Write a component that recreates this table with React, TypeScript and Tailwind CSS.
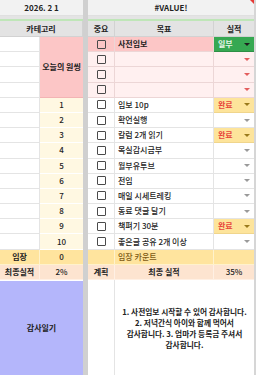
import React from "react";

const items = [
  { t: "임보 10p", done: true },
  { t: "확언실행", done: false },
  { t: "칼럼 2개 읽기", done: true },
  { t: "목실감시금부", done: false },
  { t: "월부유투브", done: false },
  { t: "전임", done: false },
  { t: "매일 시세트레킹", done: false },
  { t: "동료 댓글 달기", done: false },
  { t: "책펴기 30분", done: true },
  { t: "좋은글 공유 2개 이상", done: false },
];

function Arrow({ color }: { color: string }) {
  return (
    <svg width="6" height="3" viewBox="0 0 6 3" className="shrink-0">
      <polygon points="0,0 6,0 3,3" fill={color} />
    </svg>
  );
}

function Check() {
  return <div className="w-[9px] h-[9px] border-[1.4px] border-[#4a4a4a] rounded-[1px]" />;
}

export default function App() {
  const font = { fontFamily: '"Noto Sans CJK KR", "Noto Sans", sans-serif' };
  return (
    <div
      className="w-[256px] h-[375px] bg-white grid grid-cols-[40px_43px_5px_27px_99px_40px_2px] grid-rows-[16px_3px_2px_16px_repeat(16,15.2px)_1fr] text-[8px] leading-none text-[#222] overflow-hidden"
      style={font}
    >
      {/* frozen divider + right edge */}
      <div className="col-start-3 row-start-1 row-span-full bg-[#d0d0d0]" />
      <div className="col-start-7 row-start-1 row-span-full bg-[#d6d6d6]" />

      {/* row 1 */}
      <div className="col-span-2 bg-[#f2f2f2] border-b border-[#e0e0e0] flex items-center justify-center font-bold">
        2026. 2 1
      </div>
      <div className="col-span-3 relative bg-[#f2f2f2] border-b border-[#e0e0e0] flex items-center justify-center font-bold">
        #VALUE!
        <div className="absolute right-0 top-0 w-0 h-0 border-t-[4px] border-t-[#e53935] border-l-[4px] border-l-transparent" />
      </div>

      {/* row 2 band */}
      <div className="col-span-2 bg-[#e4e4e4]" />
      <div className="col-span-3 bg-[#e4e4e4]" />

      {/* row 3 green */}
      <div className="col-span-2 bg-[#bfe6b8]" />
      <div className="col-span-3 bg-[#bfe6b8]" />

      {/* header row */}
      <div className="col-span-2 bg-[#e3e3e3] border-b border-r border-[#d2d2d2] flex items-center justify-center font-bold">
        카테고리
      </div>
      <div className="bg-[#e3e3e3] border-b border-r border-[#d2d2d2] flex items-center justify-center font-bold">
        중요
      </div>
      <div className="bg-[#e3e3e3] border-b border-r border-[#d2d2d2] flex items-center justify-center font-bold">
        목표
      </div>
      <div className="bg-[#e3e3e3] border-b border-[#d2d2d2] flex items-center justify-center font-bold">
        실적
      </div>

      {/* pink rows */}
      {[0, 1, 2, 3].map((i) => (
        <React.Fragment key={"p" + i}>
          <div className="bg-white border-b border-r border-[#e4e4e4]" />
          {i === 0 && (
            <div className="row-span-4 bg-[#fcc6c6] border-b border-[#f3b4b4] flex items-center justify-center font-bold">
              오늘의 원씽
            </div>
          )}
          <div
            className={
              (i === 0 ? "bg-[#fcc6c6]" : "bg-[#fff0f0]") +
              " border-b border-r border-[#ecd6d6] flex items-center justify-center"
            }
          >
            <Check />
          </div>
          <div
            className={
              (i === 0 ? "bg-[#fcc6c6] font-bold" : "bg-[#fff0f0]") +
              " border-b border-r border-[#ecd6d6] flex items-center pl-[3px]"
            }
          >
            {i === 0 ? "사전임보" : ""}
          </div>
          {i === 0 ? (
            <div className="bg-[#36a852] border-b border-[#2d8f45] flex items-center justify-between pl-[4px] pr-[4px] text-[#eaf6ea] font-bold">
              <span>일부</span>
              <Arrow color="#1d1d1d" />
            </div>
          ) : (
            <div className="bg-[#fff0f0] border-b border-[#ecd6d6] flex items-center justify-end pr-[4px]">
              <Arrow color="#e35d5d" />
            </div>
          )}
        </React.Fragment>
      ))}

      {/* numbered rows */}
      {items.map((it, i) => (
        <React.Fragment key={"n" + i}>
          <div className="bg-white border-b border-r border-[#e4e4e4]" />
          <div className="bg-[#fff8e2] border-b border-white flex items-center justify-center font-medium">
            {i + 1}
          </div>
          <div className="bg-white border-b border-r border-[#e4e4e4] flex items-center justify-center">
            <Check />
          </div>
          <div className="bg-white border-b border-r border-[#e4e4e4] flex items-center pl-[3px] whitespace-nowrap font-medium">
            {it.t}
          </div>
          {it.done ? (
            <div className="bg-[#fde49b] border-b border-[#f0d58c] flex items-center justify-between pl-[4px] pr-[4px] text-[#e8453c] font-bold">
              <span>완료</span>
              <Arrow color="#9a7a1c" />
            </div>
          ) : (
            <div className="bg-white border-b border-[#e4e4e4] flex items-center justify-end pr-[4px]">
              <Arrow color="#9a9a9a" />
            </div>
          )}
        </React.Fragment>
      ))}

      {/* 임장 row */}
      <div className="bg-[#ffe49e] border-b border-r border-[#fff2cc] flex items-center justify-center font-bold">
        임장
      </div>
      <div className="bg-[#ffe49e] border-b border-[#fff2cc] flex items-center justify-center font-medium">0</div>
      <div className="bg-[#ffe49e] border-b border-r border-[#fff2cc]" />
      <div className="bg-[#ffe49e] border-b border-r border-[#fff2cc] flex items-center pl-[3px] text-[#7d5a14] font-medium">
        임장 카운트
      </div>
      <div className="bg-[#ffe49e] border-b border-[#fff2cc]" />

      {/* 최종실적 row */}
      <div className="bg-[#fde4d0] border-b border-r border-[#fff0e4] flex items-center justify-center font-bold">
        최종실적
      </div>
      <div className="bg-[#fde4d0] border-b border-[#fff0e4] flex items-center justify-center font-medium">2%</div>
      <div className="bg-[#fde4d0] border-b border-r border-[#fff0e4] flex items-center justify-center font-bold">
        계획
      </div>
      <div className="bg-[#fde4d0] border-b border-r border-[#fff0e4] flex items-center justify-center font-bold">
        최종 실적
      </div>
      <div className="bg-[#fde4d0] border-b border-[#fff0e4] flex items-center justify-center font-medium">35%</div>

      {/* 감사일기 */}
      <div className="col-span-2 bg-[#b4b6fb] mt-px flex items-center justify-center font-bold">
        감사일기
      </div>
      <div className="bg-white border-r border-[#e4e4e4]" />
      <div className="col-span-2 bg-white flex items-center justify-center text-center font-bold text-[7.7px] leading-[11px] whitespace-nowrap">
        <div>
          1. 사전임보 시작할 수 있어 감사합니다.
          <br />
          2. 저녁간식 아이와 함께 먹어서
          <br />
          감사합니다. 3. 엄마가 등록금 주셔서
          <br />
          감사합니다.
        </div>
      </div>
    </div>
  );
}
